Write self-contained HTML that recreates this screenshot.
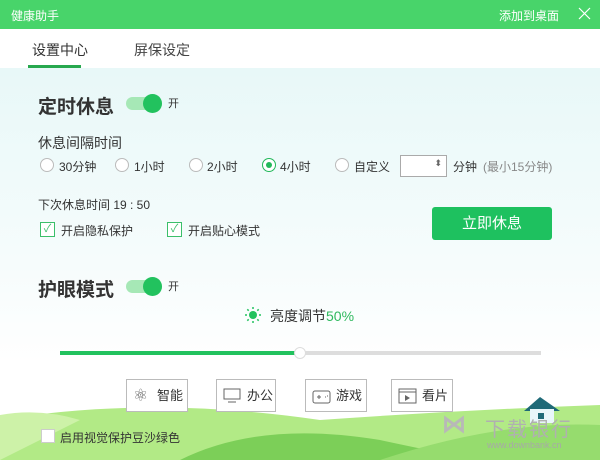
<!DOCTYPE html>
<html><head><meta charset="utf-8"><style>
*{margin:0;padding:0;box-sizing:border-box}
body{width:600px;height:460px;overflow:hidden;position:relative;font-family:"Liberation Sans","Noto Sans CJK SC",sans-serif;color:#333;background:#fff}
.a{position:absolute;white-space:nowrap}
.title{left:0;top:0;width:600px;height:29px;background:#48d46a}
.content{left:0;top:68px;width:600px;height:392px;background:linear-gradient(#e8f8f8,#f6fcfc 50%,#fff 75%)}
.tog{width:36px;height:13px;border-radius:7px;background:#a6e8b6}
.tog i{position:absolute;right:0;top:-3px;width:19px;height:19px;border-radius:50%;background:#22c25e}
.rad{width:14px;height:14px;border-radius:50%;border:1px solid #bbb;background:#fff}
.cb{width:15px;height:15px;border:1px solid #3bbf6a;background:#fff;color:#3bbf6a;font-size:11px;line-height:13px;text-align:center}
.btn{height:33px;border:1px solid #bbb;background:#fff;font-size:13px;line-height:31px;color:#333}
</style></head><body>
<div class="a title"></div>
<div class="a" style="left:11px;top:7px;color:#fff;font-size:12px">健康助手</div>
<div class="a" style="left:499px;top:7px;color:#fff;font-size:12px">添加到桌面</div>
<svg class="a" style="left:578px;top:7px" width="13" height="13"><path d="M1 1L12 12M12 1L1 12" stroke="#fff" stroke-width="1.2"/></svg>
<div class="a" style="left:32px;top:40px;font-size:14px;color:#333">设置中心</div>
<div class="a" style="left:134px;top:40px;font-size:14px;color:#444">屏保设定</div>
<div class="a" style="left:28px;top:65px;width:53px;height:3px;background:#27a84e"></div>
<div class="a content"></div>
<svg class="a" style="left:0;top:400px" width="600" height="60"><path d="M0 20 Q150 -5 320 20 Q460 10 600 5 L600 60 L0 60Z" fill="#b2ea86"/><path d="M0 15 Q40 8 80 20 Q40 40 0 60Z" fill="#cdf2a8"/><path d="M180 60 Q260 20 380 40 Q450 55 480 60Z" fill="#7ccf58"/><path d="M380 60 Q500 20 600 25 L600 60Z" fill="#96dc6e"/></svg>
<svg class="a" style="left:520px;top:395px" width="52" height="30"><path d="M4 16L20 2L40 16Z" fill="#1f6a78"/><rect x="10" y="14" width="24" height="14" fill="#e8f6fa"/><rect x="18" y="18" width="6" height="6" fill="#1f6a78"/></svg>
<div class="a" style="left:442px;top:410px;font-size:24px;color:#b8b8b8;font-weight:bold">⋈</div>
<div class="a" style="left:485px;top:413px;font-size:20px;color:#b0b0b0;letter-spacing:2px">下载银行</div>
<div class="a" style="left:487px;top:440px;font-size:9px;color:#a8a8a8">www.downbank.cn</div>

<div class="a" style="left:38px;top:92px;font-size:19px;font-weight:bold;color:#333">定时休息</div>
<div class="a tog" style="left:126px;top:97px"><i></i></div>
<div class="a" style="left:168px;top:95px;font-size:11px">开</div>
<div class="a" style="left:38px;top:133px;font-size:14px">休息间隔时间</div>
<div class="a rad" style="left:40px;top:158px"></div><div class="a" style="left:59px;top:158px;font-size:12px">30分钟</div>
<div class="a rad" style="left:115px;top:158px"></div><div class="a" style="left:134px;top:158px;font-size:12px">1小时</div>
<div class="a rad" style="left:189px;top:158px"></div><div class="a" style="left:207px;top:158px;font-size:12px">2小时</div>
<div class="a rad" style="left:262px;top:158px;border-color:#22b85a"><i style="position:absolute;left:3px;top:3px;width:6px;height:6px;border-radius:50%;background:#22b85a"></i></div><div class="a" style="left:280px;top:158px;font-size:12px">4小时</div>
<div class="a rad" style="left:335px;top:158px"></div><div class="a" style="left:354px;top:158px;font-size:12px">自定义</div>
<div class="a" style="left:400px;top:155px;width:47px;height:22px;border:1px solid #aaa;background:#fff"><span style="position:absolute;right:4px;top:2px;font-size:9px;color:#666">⬍</span></div>
<div class="a" style="left:453px;top:158px;font-size:12px">分钟</div>
<div class="a" style="left:483px;top:158px;font-size:12px;color:#888">(最小15分钟)</div>
<div class="a" style="left:38px;top:196px;font-size:12px">下次休息时间 19 : 50</div>
<div class="a cb" style="left:40px;top:222px">✓</div><div class="a" style="left:61px;top:222px;font-size:12px">开启隐私保护</div>
<div class="a cb" style="left:167px;top:222px">✓</div><div class="a" style="left:188px;top:222px;font-size:12px">开启贴心模式</div>
<div class="a" style="left:432px;top:207px;width:120px;height:33px;border-radius:3px;background:#1ec15f;color:#fff;font-size:15px;text-align:center;line-height:33px">立即休息</div>

<div class="a" style="left:38px;top:275px;font-size:19px;font-weight:bold">护眼模式</div>
<div class="a tog" style="left:126px;top:280px"><i></i></div>
<div class="a" style="left:168px;top:278px;font-size:11px">开</div>
<svg class="a" style="left:245px;top:307px" width="16" height="16"><circle cx="8" cy="8" r="4" fill="#22c25e"/><g stroke="#22c25e" stroke-width="1.5"><path d="M8 0v2M8 14v2M0 8h2M14 8h2M2.3 2.3l1.4 1.4M12.3 12.3l1.4 1.4M2.3 13.7l1.4-1.4M12.3 3.7l1.4-1.4"/></g></svg>
<div class="a" style="left:270px;top:306px;font-size:14px">亮度调节<span style="color:#2fb95e">50%</span></div>
<div class="a" style="left:60px;top:351px;width:481px;height:4px;background:#ddd"></div>
<div class="a" style="left:60px;top:351px;width:240px;height:4px;background:#22c25e"></div>
<div class="a" style="left:294px;top:347px;width:12px;height:12px;border-radius:50%;background:#fff;border:1px solid #ddd"></div>
<div class="a btn" style="left:126px;top:379px;width:62px;padding-left:30px">智能<span style="position:absolute;left:6px;top:0;font-size:17px;color:#666">⚛</span></div>
<div class="a btn" style="left:216px;top:379px;width:60px;padding-left:30px">办公<svg style="position:absolute;left:6px;top:8px" width="18" height="16"><rect x="1" y="1" width="16" height="10" fill="none" stroke="#666"/><path d="M5 14h8" stroke="#666"/></svg></div>
<div class="a btn" style="left:305px;top:379px;width:62px;padding-left:30px">游戏<svg style="position:absolute;left:6px;top:7px" width="20" height="18"><rect x="1" y="4" width="17" height="12" rx="2" fill="none" stroke="#666"/><path d="M5 10h4M7 8v4M13 10h1M15 9h1" stroke="#666"/></svg></div>
<div class="a btn" style="left:391px;top:379px;width:62px;padding-left:30px">看片<svg style="position:absolute;left:6px;top:7px" width="20" height="18"><rect x="1" y="2" width="17" height="14" fill="none" stroke="#666"/><path d="M1 5h17" stroke="#666"/><path d="M7 8v6l5-3z" fill="#666"/></svg></div>
<div class="a" style="left:41px;top:429px;width:14px;height:14px;background:#fff;border:1px solid #ccc"></div>
<div class="a" style="left:60px;top:429px;font-size:12px">启用视觉保护豆沙绿色</div>
</body></html>
